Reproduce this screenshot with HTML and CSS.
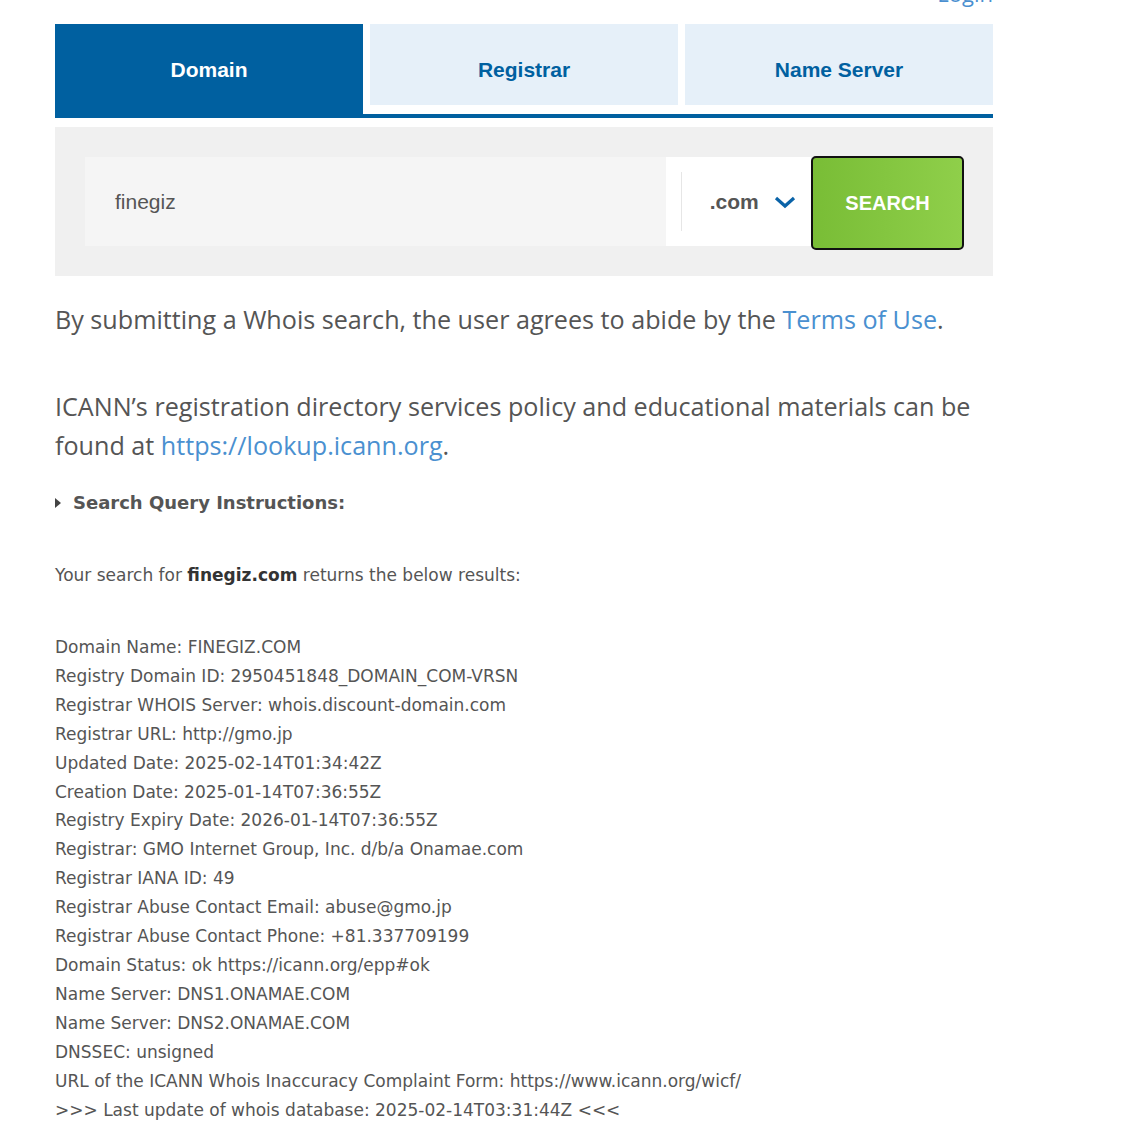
FILE: index.html
```html
<!DOCTYPE html>
<html>
<head>
<meta charset="utf-8">
<link rel="stylesheet" href="styles.css">
</head>
<body>
<div class="page">
  <div class="topbar"><a class="login" href="#">Login</a></div>
  <div class="tabs">
    <div class="tab active">Domain</div>
    <div class="tab">Registrar</div>
    <div class="tab">Name Server</div>
  </div>
  <div class="searchbox">
    <div class="field">finegiz</div>
    <div class="tld"><span class="tld-inner">.com <svg class="chev" width="22" height="14" viewBox="0 0 22 14"><path d="M2 3 L11 11 L20 3" fill="none" stroke="#0a63a8" stroke-width="3.2"/></svg></span></div>
    <button class="btn">SEARCH</button>
  </div>
  <p class="lead">By submitting a Whois search, the user agrees to abide by the <a href="#">Terms of Use</a>.</p>
  <p class="lead lead2">ICANN’s registration directory services policy and educational materials can be found at <a href="#">https://lookup.icann.org</a>.</p>
  <div class="instr"><span class="tri"></span>Search Query Instructions:</div>
  <p class="yours">Your search for <b>finegiz.com</b> returns the below results:</p>
  <div class="results">
    <div>Domain Name: FINEGIZ.COM</div>
    <div>Registry Domain ID: 2950451848_DOMAIN_COM-VRSN</div>
    <div>Registrar WHOIS Server: whois.discount-domain.com</div>
    <div>Registrar URL: http://gmo.jp</div>
    <div>Updated Date: 2025-02-14T01:34:42Z</div>
    <div>Creation Date: 2025-01-14T07:36:55Z</div>
    <div>Registry Expiry Date: 2026-01-14T07:36:55Z</div>
    <div>Registrar: GMO Internet Group, Inc. d/b/a Onamae.com</div>
    <div>Registrar IANA ID: 49</div>
    <div>Registrar Abuse Contact Email: abuse@gmo.jp</div>
    <div>Registrar Abuse Contact Phone: +81.337709199</div>
    <div>Domain Status: ok https://icann.org/epp#ok</div>
    <div>Name Server: DNS1.ONAMAE.COM</div>
    <div>Name Server: DNS2.ONAMAE.COM</div>
    <div>DNSSEC: unsigned</div>
    <div>URL of the ICANN Whois Inaccuracy Complaint Form: https://www.icann.org/wicf/</div>
    <div>&gt;&gt;&gt; Last update of whois database: 2025-02-14T03:31:44Z &lt;&lt;&lt;</div>
  </div>
</div>
</body>
</html>
```
FILE: styles.css
```css
html, body { margin: 0; padding: 0; background: #fff; }
body { font-family: "Open Sans", sans-serif; color: #555; overflow: hidden; }
.page { width: 938px; margin-left: 55px; }
.topbar { height: 24px; position: relative; overflow: hidden; }
.login { position: absolute; right: 0; top: -22px; font-family: "Open Sans", sans-serif; font-size: 22px; color: #4a8fd0; text-decoration: none; }
.tabs { display: flex; align-items: flex-start; gap: 7px; border-bottom: 4px solid #0060a0; height: 90px; }
.tab { flex: 1; text-align: center; padding-top: 34px; box-sizing: border-box; line-height: 24px; font-family: "Liberation Sans", Arial, sans-serif; font-weight: bold; font-size: 21px; color: #0060a0; background: #e6f0f9; height: 81px; }
.tab.active { background: #0060a0; color: #fff; height: 90px; }
.searchbox { margin-top: 9px; background: #f0f0f0; height: 149px; display: flex; align-items: center; padding: 0 29px 0 30px; box-sizing: border-box; }
.field { width: 582px; height: 89px; background: #f5f5f5; display: flex; align-items: center; padding-left: 30px; box-sizing: border-box; font-family: "Liberation Sans", Arial, sans-serif; font-size: 21px; color: #555; }
.tld { width: 145px; height: 89px; background: #fff; display: flex; align-items: center; padding-left: 15px; box-sizing: border-box; }
.tld-inner { border-left: 1px solid #e6e6e6; height: 59px; flex: 1; display: flex; align-items: center; justify-content: center; gap: 15px; padding-left: 12px; font-family: "Liberation Sans", Arial, sans-serif; font-weight: bold; font-size: 21px; color: #555; }
.btn { width: 153px; height: 94px; border: 2px solid #111; border-radius: 5px; background: linear-gradient(90deg, #79bd36, #8fcf4a); color: #fff; font-family: "Liberation Sans", Arial, sans-serif; font-weight: bold; font-size: 20px; margin-top: 3px; }
.lead { font-family: "Open Sans", sans-serif; font-size: 25.15px; line-height: 39px; margin: 24px 0 0; color: #555; }
.lead2 { margin-top: 48px; }
.lead a { color: #4a90d0; text-decoration: none; }
.instr { margin-top: 27px; font-family: "DejaVu Sans", Verdana, sans-serif; font-weight: bold; font-size: 18px; color: #555; display: flex; align-items: center; }
.tri { width: 0; height: 0; border-left: 6px solid #444; border-top: 5px solid transparent; border-bottom: 5px solid transparent; margin-right: 12px; }
.yours { font-family: "DejaVu Sans", Verdana, sans-serif; font-size: 17px; margin: 52px 0 0; color: #555; }
.yours b { color: #333; }
.results { margin-top: 48px; font-family: "DejaVu Sans", Verdana, sans-serif; font-size: 17px; line-height: 28.9px; color: #555; }
```
